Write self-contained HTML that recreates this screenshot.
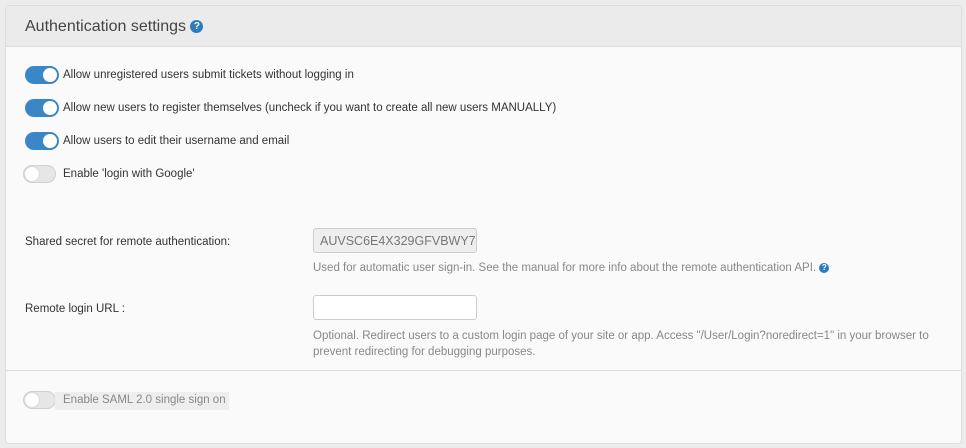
<!DOCTYPE html>
<html><head><style>
body{margin:0;width:966px;height:448px;background:#ececec;font-family:"Liberation Sans",sans-serif;font-size:11.5px;color:#333;position:relative;overflow:hidden}
.panel{position:absolute;left:5px;top:5px;width:957px;height:439px;background:#fafafa;border:1px solid #ddd;border-radius:4px;box-sizing:border-box}
.hdr{height:40px;background:#ebebeb;border-bottom:1px solid #ddd;border-radius:4px 4px 0 0}
.t{position:absolute;white-space:nowrap}
.tog{position:absolute;width:34px;height:18px;border-radius:9px;background:#3a87c8}
.tog::after{content:"";position:absolute;right:2px;top:2px;width:14px;height:14px;border-radius:50%;background:#fff}
.off{background:#e6e6e6;border:1px solid #d0d0d0;box-sizing:border-box;width:33px}
.off::after{left:1px;right:auto;top:1px;width:14px;height:14px;box-shadow:0 0 1px #999}
.q{display:inline-block;width:12px;height:12px;border-radius:50%;background:#2d7cc0;color:#fff;font-size:9px;font-weight:bold;text-align:center;line-height:12px;vertical-align:middle}
.inp{position:absolute;left:313px;width:164px;height:25px;border:1px solid #ccc;border-radius:3px;background:#fff;box-sizing:border-box}
.help{color:#888}
</style></head><body>
<div class="panel"><div class="hdr"></div></div>
<div class="t" style="left:25px;top:18px;font-size:16px;color:#444">Authentication settings <span class="q" style="width:13px;height:13px;line-height:13px;font-size:10px">?</span></div>
<div class="tog" style="left:25px;top:66px"></div><div class="t" style="left:63px;top:69px">Allow unregistered users submit tickets without logging in</div>
<div class="tog" style="left:25px;top:99px"></div><div class="t" style="left:63px;top:102px">Allow new users to register themselves (uncheck if you want to create all new users MANUALLY)</div>
<div class="tog" style="left:25px;top:132px"></div><div class="t" style="left:63px;top:135px">Allow users to edit their username and email</div>
<div class="tog off" style="left:23px;top:165px"></div><div class="t" style="left:63px;top:168px">Enable 'login with Google'</div>
<div class="t" style="left:25px;top:236px">Shared secret for remote authentication:</div>
<div class="inp" style="top:228px;background:#eee;color:#777;font-size:12.5px;padding:5px 6px;overflow:hidden">AUVSC6E4X329GFVBWY7F</div>
<div class="t help" style="left:313px;top:262px">Used for automatic user sign-in. See the manual for more info about the remote authentication API. <span class="q" style="width:10px;height:10px;line-height:10px;font-size:8px">?</span></div>
<div class="t" style="left:25px;top:303px">Remote login URL :</div>
<div class="inp" style="top:295px"></div>
<div class="t help" style="left:313px;top:328px;line-height:16px">Optional. Redirect users to a custom login page of your site or app. Access "/User/Login?noredirect=1" in your browser to<br>prevent redirecting for debugging purposes.</div>
<div style="position:absolute;left:6px;top:370px;width:955px;height:1px;background:#ddd"></div>
<div class="tog off" style="left:23px;top:391px"></div><div class="t" style="left:55px;top:392px;background:#eee;color:#888;padding:2px 3px 2px 8px;height:14px">Enable SAML 2.0 single sign on</div>
</body></html>
